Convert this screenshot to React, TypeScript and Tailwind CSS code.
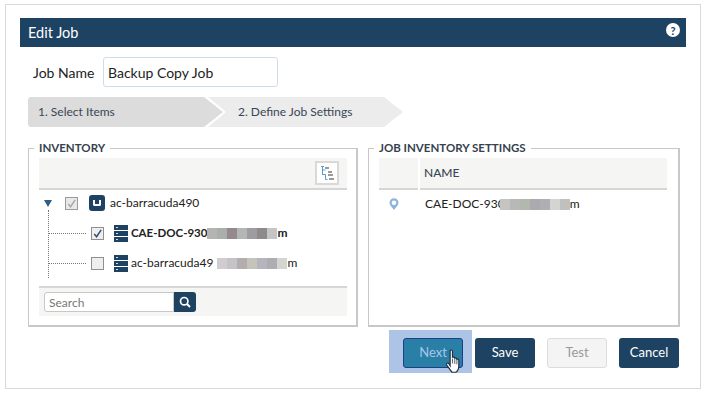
const font = "font-['Lato','Open_Sans',sans-serif]";

function Blur({ colors, className = '' }: { colors: string[]; className?: string }) {
  return (
    <span className={`flex h-[11px] items-center ${className}`}>
      {colors.map((c, i) => (
        <span key={i} className="h-[11px] w-[10px]" style={{ backgroundColor: c }} />
      ))}
    </span>
  );
}

function Check({ checked, muted }: { checked?: boolean; muted?: boolean }) {
  return (
    <span
      className={`flex h-[13px] w-[13px] shrink-0 items-center justify-center border ${
        muted ? 'border-[#9a9a9a] bg-[#e8e8e8]' : 'border-[#8f8f8f] bg-[#eeeeee]'
      }`}
    >
      {checked && (
        <svg viewBox="0 0 12 12" className="h-[11px] w-[11px]">
          <path
            d="M2.5 6.5 5 9.5 10 2"
            fill="none"
            stroke={muted ? '#a8a8a8' : '#2f4f6f'}
            strokeWidth="1.6"
          />
        </svg>
      )}
    </span>
  );
}

function ServerIcon() {
  return (
    <svg viewBox="0 0 14 17" className="h-[17px] w-[14px] shrink-0">
      <rect x="0" y="0" width="14" height="5" fill="#1e4262" />
      <rect x="0" y="6" width="14" height="5" fill="#1e4262" />
      <rect x="0" y="12" width="14" height="5" fill="#1e4262" />
      <rect x="2" y="2" width="2" height="1" fill="#cfd8e0" />
      <rect x="2" y="8" width="2" height="1" fill="#cfd8e0" />
      <rect x="2" y="14" width="2" height="1" fill="#cfd8e0" />
    </svg>
  );
}

function TreeIcon() {
  return (
    <svg viewBox="0 0 13 15" className="h-[15px] w-[13px]">
      <path d="M1.500 1v8M1.500 4h3M1.500 8.500h3M4.500 8.500v5h2" fill="none" stroke="#5a9bd5" strokeWidth="1" />
      <rect x="0" y="0" width="3" height="1" fill="#5a9bd5" />
      <rect x="4" y="1" width="4" height="2" fill="#9a9a9a" />
      <rect x="7" y="5" width="4" height="2" fill="#9a9a9a" />
      <rect x="7" y="8" width="5" height="2" fill="#9a9a9a" />
      <rect x="8" y="12" width="5" height="2" fill="#9a9a9a" />
    </svg>
  );
}

function HandCursor() {
  return (
    <svg viewBox="0 0 18 26" className="absolute left-[42px] top-[11px] h-[25px] w-[18px]">
      <path
        d="M5 2.2c0-1.500 2.400-1.500 2.400 0v7c0-1 2.200-1 2.200 0v1c0-1 2.200-1 2.200 0v1c0-1 2.200-1 2.200 0v6c0 3-1.500 6-3 7H7c-1.500-1.500-3-4-5.500-7.500-1-1.600.8-2.800 2-1.600L5 17.500z"
        fill="#ffffff"
        stroke="#1f2f3f"
        strokeWidth="1.200"
      />
      <path d="M7.500 10v5M9.800 10.500v5M12 11v5" fill="none" stroke="#1f2f3f" strokeWidth="0.8" />
    </svg>
  );
}

export default function App() {
  return (
    <div className={`${font} h-[402px] w-[718px] bg-white pl-[5px] pt-1 text-[#222]`}>
      <div className="h-[385px] w-[696px] border border-[#d9d9d9] pl-[14px] pt-[13px]">
        <div className="flex h-[29px] w-[666px] items-center justify-between bg-[#1e4262] pl-2 pr-[6px] text-[14.5px] text-white">
          <span>Edit Job</span>
          <span className="mb-[5px] flex h-[14px] w-[14px] items-center justify-center rounded-full bg-white text-[11px] font-bold leading-none text-[#1e4262]">
            ?
          </span>
        </div>

        <div className="ml-[13px] mt-[10px] flex h-[30px] items-center text-[14px]">
          <span className="w-[70px]">Job Name</span>
          <input
            readOnly
            value="Backup Copy Job"
            className="h-[30px] w-[175px] rounded-[3px] border border-[#cfdcec] pl-1 text-[14px] outline-none"
          />
        </div>

        <div className="ml-2 mt-[10px] flex h-[30px] text-[12px] text-[#3a4654]">
          <div className="flex h-[30px] w-[195px] items-center rounded-l-[3px] bg-[#dcdcdc] pl-[10px] [clip-path:polygon(0_0,176px_0,100%_50%,176px_100%,0_100%)]">
            1. Select Items
          </div>
          <div className="-ml-[15px] flex h-[30px] w-[195px] items-center bg-[#ececec] pl-[30px] [clip-path:polygon(0_0,176px_0,100%_50%,176px_100%,0_100%,18px_50%)]">
            2. Define Job Settings
          </div>
        </div>

        <div className="ml-2 mt-[14px] flex gap-[10px]">
          <fieldset className="h-[186px] w-[330px] border-2 border-[#c8c8c8] pb-[9px] pl-[10px] pr-[9px] [border-width:1px_2px_2px_1px]">
            <legend className="-ml-[5px] px-[5px] text-[11.500px] font-bold leading-[14px] text-[#36424e]">
              INVENTORY
            </legend>
            <div className="mt-[3px] flex h-[32px] items-center justify-end border-b-2 border-[#d6d6d6] bg-[#f5f5f3] pr-2">
              <span className="flex h-6 w-6 items-center justify-center border-2 border-[#d9d9d9] bg-white">
                <TreeIcon />
              </span>
            </div>
            <div className="h-[96px] text-[12px]">
              <div className="flex h-[26px] items-center pl-[5px]">
                <span className="h-0 w-0 border-x-[4.500px] border-t-[7px] border-x-transparent border-t-[#2f5f86]" />
                <span className="ml-[13px]">
                  <Check checked muted />
                </span>
                <span className="ml-[11px] flex h-4 w-4 shrink-0 items-center justify-center rounded-[3px] bg-[#1e4262]">
                  <span className="h-[6px] w-2 rounded-b-[2px] border-x-2 border-b-2 border-white" />
                </span>
                <span className="ml-[5px]">ac-barracuda490</span>
              </div>
              <div className="-mt-[6px] ml-[9px] h-[68px] border-l border-dotted border-[#777] pt-[6px]">
                <div className="flex h-[30px] items-center pt-[4px]">
                  <span className="w-[37px] border-t border-dotted border-[#777]" />
                  <span className="ml-[5px]">
                    <Check checked />
                  </span>
                  <span className="ml-[10px]">
                    <ServerIcon />
                  </span>
                  <span className="ml-[3px] text-[11.500px] font-bold">CAE-DOC-930</span>
                  <Blur colors={['#b4b4b2', '#a9b0ac', '#94898f', '#b2b6b4', '#a09ba0', '#8e8a8c', '#c2c4c6']} />
                  <span className="font-bold">m</span>
                </div>
                <div className="flex h-[30px] items-center pt-[4px]">
                  <span className="w-[37px] border-t border-dotted border-[#777]" />
                  <span className="ml-[5px]">
                    <Check />
                  </span>
                  <span className="ml-[10px]">
                    <ServerIcon />
                  </span>
                  <span className="ml-[3px]">ac-barracuda49</span>
                  <Blur className="ml-[4px]" colors={['#cfcdd0', '#c5c3c6', '#b4adae', '#c4c4ba', '#b6b4bc', '#aeaeb2', '#d4d4d0']} />
                  <span>m</span>
                </div>
              </div>
            </div>
            <div className="flex h-[30px] items-center border-t-2 border-[#d6d6d6] bg-[#f5f5f3] pl-[5px]">
              <input
                readOnly
                placeholder="Search"
                className="h-5 w-[130px] rounded-l-[3px] border border-[#c8c8c8] bg-white pl-1 text-[12px] outline-none placeholder:text-[#777]"
              />
              <span className="flex h-5 w-[22px] items-center justify-center rounded-r-[3px] bg-[#1e4262]">
                <svg viewBox="0 0 12 12" className="h-3 w-3">
                  <circle cx="5.200" cy="5.200" r="3.700" fill="none" stroke="#fff" strokeWidth="1.700" />
                  <path d="M8 8l3 3" stroke="#fff" strokeWidth="1.900" />
                </svg>
              </span>
            </div>
          </fieldset>

          <fieldset className="h-[186px] w-[312px] border-2 border-[#c8c8c8] pl-[10px] [border-width:1px_2px_2px_1px]">
            <legend className="-ml-[5px] px-[5px] text-[11.500px] font-bold leading-[14px] text-[#36424e]">
              JOB INVENTORY SETTINGS
            </legend>
            <div className="mt-[3px] flex h-[32px] w-[288px] gap-[2px]">
              <div className="w-[39px] border-b-2 border-[#d6d6d6] bg-[#f5f5f3]" />
              <div className="flex flex-1 items-center border-b-2 border-[#d6d6d6] bg-[#f5f5f3] pl-1 text-[12px] font-medium text-[#3a4654]">
                NAME
              </div>
            </div>
            <div className="flex h-[28px] items-center text-[12px]">
              <svg viewBox="0 0 10 12" className="ml-[10px] h-3 w-[10px] shrink-0">
                <path
                  d="M5 12C3.500 10 .5 7.500.5 4.800a4.500 4.500 0 0 1 9 0C9.500 7.500 6.500 10 5 12z"
                  fill="#8db4da"
                />
                <circle cx="5" cy="4.800" r="2.300" fill="#fff" />
              </svg>
              <span className="ml-[26px]">CAE-DOC-930</span>
              <Blur className="-ml-[5px]" colors={['#c4c4c2', '#b8b8b6', '#b2b8ae', '#acaab0', '#b0aeb2', '#d4d4d2', '#c0c0be']} />
              <span>m</span>
            </div>
          </fieldset>
        </div>

        <div className="ml-[383px] mt-[11px] flex gap-3 text-[13px]">
          <span className="relative h-[30px] w-[60px]">
            <span className="absolute -left-[14px] -top-2 h-[43px] w-[83px] bg-[#aec4e6]" />
            <span className="absolute inset-0 flex items-center justify-center rounded-[3px] border border-[#1c3f86] bg-[#2a7fa6] text-[#a9c6ea]">
              Next
            </span>
            <HandCursor />
          </span>
          <span className="flex h-[30px] w-[60px] items-center justify-center rounded-[3px] bg-[#1e4262] text-white">
            Save
          </span>
          <span className="flex h-[30px] w-[60px] items-center justify-center rounded-[3px] border border-[#dcdcdc] bg-[#f4f4f4] text-[#9a9a9a]">
            Test
          </span>
          <span className="flex h-[30px] w-[60px] items-center justify-center rounded-[3px] bg-[#1e4262] text-white">
            Cancel
          </span>
        </div>
      </div>
    </div>
  );
}
